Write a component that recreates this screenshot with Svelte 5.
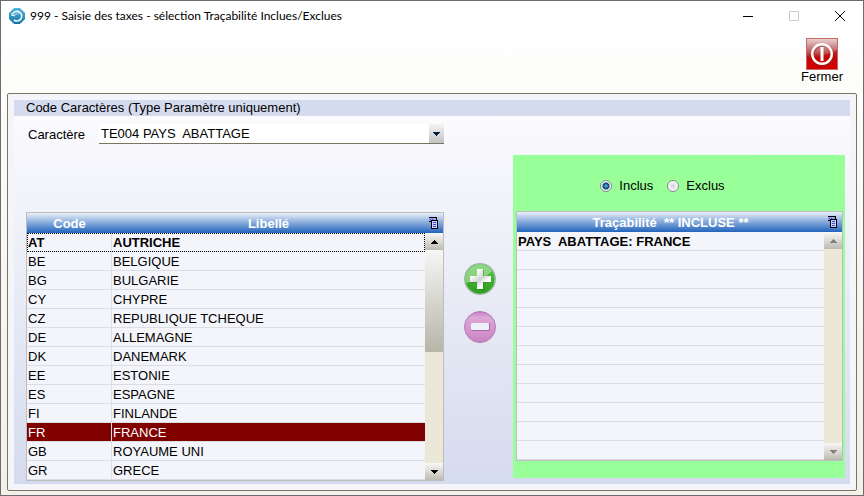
<script lang="ts">
  type Country = { code: string; label: string };

  const countries: Country[] = [
    { code: 'AT', label: 'AUTRICHE' },
    { code: 'BE', label: 'BELGIQUE' },
    { code: 'BG', label: 'BULGARIE' },
    { code: 'CY', label: 'CHYPRE' },
    { code: 'CZ', label: 'REPUBLIQUE TCHEQUE' },
    { code: 'DE', label: 'ALLEMAGNE' },
    { code: 'DK', label: 'DANEMARK' },
    { code: 'EE', label: 'ESTONIE' },
    { code: 'ES', label: 'ESPAGNE' },
    { code: 'FI', label: 'FINLANDE' },
    { code: 'FR', label: 'FRANCE' },
    { code: 'GB', label: 'ROYAUME UNI' },
    { code: 'GR', label: 'GRECE' },
  ];

  const TRACE_ROWS = 12;

  let selected = $state('FR');
  let mode = $state('inclus');
  let traces = $state(['PAYS\u00a0 ABATTAGE: FRANCE']);
  let emptyRows = $derived(Math.max(0, TRACE_ROWS - traces.length));
  let traceTitle = $derived(
    mode === 'inclus' ? 'Traçabilité\u00a0 ** INCLUSE **' : 'Traçabilité\u00a0 ** EXCLUE **'
  );

  function addTrace() {
    const country = countries.find((c) => c.code === selected);
    if (!country) return;
    const line = `PAYS\u00a0 ABATTAGE: ${country.label}`;
    if (!traces.includes(line)) {
      traces.push(line);
    }
  }

  function removeTrace() {
    traces.pop();
  }
</script>

{#snippet copyIcon()}
  <svg width="10" height="12" viewBox="1 0 10 12" shape-rendering="crispEdges" aria-hidden="true">
    <path d="M1 1h7v3H1z" fill="#9a9cf0" />
    <path d="M1 0h8v3H8V1H1zM1 4h2v1H1z" fill="#000" />
    <path d="M2 2h1v1H2zM4 2h1v1H4z" fill="#4a4ad0" />
    <path d="M3 3h7v9H3z" fill="#000" />
    <path d="M4 4h5v7H4z" fill="#c8ccff" />
    <path d="M5 5h3v1H5zM5 7h3v1H5zM5 9h3v1H5z" fill="#4a4ad0" />
  </svg>
{/snippet}

{#snippet arrow(up: boolean, color: string)}
  <svg width="7" height="4" viewBox="0 0 7 4" shape-rendering="crispEdges" aria-hidden="true">
    {#if up}
      <path d="M3 0h1v1h1v1h1v1h1v1H0V3h1V2h1V1h1z" fill={color} />
    {:else}
      <path d="M0 0h7v1H6v1H5v1H4v1H3V3H2V2H1V1H0z" fill={color} />
    {/if}
  </svg>
{/snippet}

<div class="window">
  <header class="titlebar">
    <svg class="logo" width="16" height="16" viewBox="0 0 16 16" aria-hidden="true">
      <defs>
        <linearGradient id="logo-fill" x1="0" y1="0" x2="0" y2="1">
          <stop offset="0" stop-color="#4fb3dc" />
          <stop offset="1" stop-color="#1577a8" />
        </linearGradient>
      </defs>
      <path d="M5 .5h6L15.500 5v6L11 15.500H5L.5 11V5z" fill="url(#logo-fill)" stroke="url(#logo-fill)" />
      <path d="M4 5.500A4.800 4.800 0 1 1 5 12" fill="none" stroke="#f0faff" stroke-width="1.600" />
      <path d="M5.500 8.500a2.500 2.500 0 0 1 4-2.300" fill="none" stroke="#bfe5f4" stroke-width="1" />
      <path d="M2.500 4.500V8H6z" fill="#f0faff" />
    </svg>
    <h1>999 - Saisie des taxes - sélection Traçabilité Inclues/Exclues</h1>
    <div class="controls">
      <button type="button" aria-label="Réduire">
        <svg width="10" height="10" viewBox="0 0 10 10"><path d="M0 5.500h10" stroke="#000" /></svg>
      </button>
      <button type="button" aria-label="Agrandir" disabled>
        <svg width="10" height="10" viewBox="0 0 10 10"><path d="M.5.5h9v9h-9z" fill="none" stroke="#ccc" /></svg>
      </button>
      <button type="button" aria-label="Fermer la fenêtre">
        <svg width="10" height="10" viewBox="0 0 10 10"><path d="M0 0l10 10M10 0L0 10" stroke="#000" /></svg>
      </button>
    </div>
  </header>

  <div class="toolbar">
    <button type="button" class="close">
      <svg width="32" height="32" viewBox="0 0 32 32" aria-hidden="true">
        <defs>
          <linearGradient id="close-fill" x1="0" y1="0" x2="0" y2="1">
            <stop offset="0" stop-color="#e9d4d4" />
            <stop offset="0.45" stop-color="#bd5555" />
            <stop offset="0.6" stop-color="#b41414" />
            <stop offset="1" stop-color="#e60000" />
          </linearGradient>
        </defs>
        <rect x="0.5" y="0.5" width="31" height="31" fill="url(#close-fill)" stroke="#c46a6a" />
        <path d="M1 20q18-1 30-8v19H1z" fill="#c80000" opacity="0.6" />
        <circle cx="16.500" cy="17" r="10" fill="none" stroke="#8c1c1c" stroke-width="3" opacity="0.6" />
        <circle cx="16" cy="16" r="9.800" fill="none" stroke="#fff" stroke-width="2.400" />
        <path d="M16 9v14" stroke="#fff" stroke-width="3" />
      </svg>
      <span>Fermer</span>
    </button>
  </div>

  <main class="frame">
    <div class="panel">
      <h2>Code Caractères (Type Paramètre uniquement)</h2>

      <div class="columns">
        <section class="source">
          <div class="field">
            <label for="caractere">Caractère</label>
            <div class="combo">
              <select id="caractere">
                <option>TE004 PAYS&nbsp; ABATTAGE</option>
              </select>
              <span class="combo-arrow">{@render arrow(false, '#00203c')}</span>
            </div>
          </div>

          <div class="grid">
            <table>
              <thead>
                <tr>
                  <th class="code">Code</th>
                  <th>Libellé</th>
                </tr>
              </thead>
              <tbody>
                {#each countries as country, i (country.code)}
                  <tr
                    class:focused={i === 0}
                    class:selected={country.code === selected}
                    onclick={() => (selected = country.code)}
                  >
                    <td class="code">{country.code}</td>
                    <td>{country.label}</td>
                  </tr>
                {/each}
              </tbody>
            </table>
            <div class="side">
              <button type="button" class="menu" aria-label="Menu de la table">{@render copyIcon()}</button>
              <button type="button" class="step" aria-label="Monter">{@render arrow(true, '#000')}</button>
              <div class="track"><div class="thumb"></div></div>
              <button type="button" class="step" aria-label="Descendre">{@render arrow(false, '#000')}</button>
            </div>
          </div>
        </section>

        <div class="actions">
          <button type="button" aria-label="Ajouter" onclick={addTrace}>
            <svg width="32" height="32" viewBox="0 0 32 32" aria-hidden="true">
              <defs>
                <linearGradient id="add-fill" x1="0" y1="0" x2="0" y2="1">
                  <stop offset="0" stop-color="#5cc850" />
                  <stop offset="1" stop-color="#2c9c1c" />
                </linearGradient>
                <linearGradient id="plus-fill" x1="0" y1="0" x2="1" y2="1">
                  <stop offset="0.2" stop-color="#fff" />
                  <stop offset="0.5" stop-color="#d0d4d0" />
                  <stop offset="0.7" stop-color="#fff" />
                </linearGradient>
              </defs>
              <circle cx="16" cy="16" r="15.200" fill="url(#add-fill)" stroke="#9ab898" stroke-width="1.400" />
              <path d="M2 20A14.500 14.500 0 0 1 28 8Q20 17 2 20z" fill="#b4e6a8" opacity="0.6" />
              <path d="M14 7h6v7h7v6h-7v7h-6v-7H6v-6h8z" fill="#2f7a24" opacity="0.5" />
              <path d="M13 6h6v7h8v6h-8v7h-6v-7H6v-6h7z" fill="url(#plus-fill)" />
            </svg>
          </button>
          <button type="button" aria-label="Retirer" onclick={removeTrace}>
            <svg width="32" height="32" viewBox="0 0 32 32" aria-hidden="true">
              <defs>
                <linearGradient id="remove-fill" x1="0" y1="0" x2="0" y2="1">
                  <stop offset="0" stop-color="#c87cc0" />
                  <stop offset="0.2" stop-color="#dca8d8" />
                  <stop offset="1" stop-color="#c884c4" />
                </linearGradient>
              </defs>
              <circle cx="16" cy="16" r="15.500" fill="url(#remove-fill)" stroke="#b87cb4" />
              <rect x="7" y="12" width="19" height="8" rx="1" fill="#a868a4" />
              <rect x="7" y="12" width="18" height="7" rx="1" fill="#eef0f8" />
            </svg>
          </button>
        </div>

        <section class="target">
          <div class="modes" role="radiogroup" aria-label="Mode">
            <label><input type="radio" name="mode" value="inclus" bind:group={mode} />Inclus</label>
            <label><input type="radio" name="mode" value="exclus" bind:group={mode} />Exclus</label>
          </div>

          <div class="grid">
            <table>
              <thead>
                <tr><th>{traceTitle}</th></tr>
              </thead>
              <tbody>
                {#each traces as trace}
                  <tr class="trace"><td>{trace}</td></tr>
                {/each}
                {#each { length: emptyRows } as _}
                  <tr><td></td></tr>
                {/each}
              </tbody>
            </table>
            <div class="side">
              <button type="button" class="menu" aria-label="Menu de la table">{@render copyIcon()}</button>
              <button type="button" class="step" aria-label="Monter" disabled>{@render arrow(true, '#808080')}</button>
              <div class="track"></div>
              <button type="button" class="step" aria-label="Descendre" disabled>{@render arrow(false, '#808080')}</button>
            </div>
          </div>
        </section>
      </div>
    </div>
  </main>
</div>

<style>
  :global(body) {
    background: #fff;
  }

  .window {
    box-sizing: border-box;
    display: flex;
    flex-direction: column;
    min-height: 100vh;
    border: 1px solid #6c6b6e;
    background: linear-gradient(#fff 30px, #fcfcfa 90px, #f2f0e9);
    font-family: 'Liberation Sans', Arial, sans-serif;
    font-size: 13px;
    color: #000;
  }

  button {
    display: flex;
    align-items: center;
    justify-content: center;
    margin: 0;
    padding: 0;
    border: 0;
    background: none;
    font: inherit;
    color: inherit;
  }

  .titlebar {
    display: flex;
    align-items: center;
    height: 29px;
    padding-left: 8px;
  }

  h1 {
    flex: 1;
    margin: 0 0 0 5px;
    font-family: 'Segoe UI', Lato, 'Open Sans', sans-serif;
    font-size: 12px;
    font-weight: 400;
    white-space: nowrap;
  }

  .controls {
    display: flex;
  }

  .controls button {
    width: 46px;
    height: 29px;
  }

  .toolbar {
    display: flex;
    justify-content: flex-end;
    height: 55px;
    padding: 8px 20px 0 0;
  }

  .close {
    flex-direction: column;
    justify-content: flex-start;
  }

  .close span {
    line-height: 14px;
  }

  .frame {
    flex: 1;
    display: flex;
    margin: 0 6px 4px;
    padding: 6px;
    border: 1px solid #7c7462;
    border-radius: 2px;
    background: #f4f5fb;
  }

  .panel {
    flex: 1;
    min-width: 0;
    background: linear-gradient(#fbfbfe 16px, #d5dbee);
  }

  h2 {
    margin: 0;
    padding: 0 12px;
    background: #d5dbee;
    font-size: 13px;
    font-weight: 400;
    line-height: 16px;
  }

  .columns {
    display: grid;
    grid-template-columns: minmax(0, 418fr) auto minmax(0, 332fr);
    align-items: start;
    padding: 0 5px 3px 12px;
  }

  .field {
    display: flex;
    align-items: center;
    margin: 8px 0 68px 2px;
  }

  .field label {
    width: 71px;
  }

  .combo {
    position: relative;
    flex: 1;
    display: flex;
  }

  select {
    appearance: none;
    width: 100%;
    height: 20px;
    padding: 0 16px 0 2px;
    border: 0;
    border-bottom: 1px solid #7c7462;
    border-radius: 0;
    background: #fff;
    font: inherit;
    color: inherit;
  }

  .combo-arrow {
    position: absolute;
    top: 0;
    right: 0;
    bottom: 1px;
    display: flex;
    align-items: center;
    justify-content: center;
    width: 15px;
    background: linear-gradient(#f4f4f4, #c2c2c2);
    pointer-events: none;
  }

  .grid {
    display: flex;
    border: 1px solid #bdbdc0;
    background: #f4f5fb;
  }

  table {
    flex: 1;
    min-width: 0;
    border-collapse: separate;
    border-spacing: 0;
    table-layout: fixed;
  }

  thead tr,
  .menu {
    background: linear-gradient(#eaf0f9, #8eb0de 45%, #2164bc);
  }

  th {
    box-sizing: border-box;
    height: 20px;
    padding: 2px 0 0;
    color: #fff;
    font-weight: 700;
    line-height: 18px;
    white-space: pre;
  }

  th.code {
    width: 85px;
  }

  td {
    box-sizing: border-box;
    height: 19px;
    padding: 2px 0 0 1px;
    border-bottom: 1px solid #dcdde2;
    line-height: 16px;
    white-space: nowrap;
  }

  td.code {
    border-right: 1px solid #dcdde2;
  }

  tr.focused,
  tr.trace {
    font-weight: 700;
  }

  tr.focused {
    outline: 1px dotted #000;
    outline-offset: -1px;
  }

  tr.selected td {
    background: #800000;
    background-clip: padding-box;
    color: #fff;
  }

  .side {
    display: flex;
    flex-direction: column;
    width: 18px;
  }

  .menu {
    height: 20px;
  }

  .step {
    height: 17px;
    background: linear-gradient(#f8f8f6, #bdbbb0);
  }

  .track {
    flex: 1;
    background: #ebe8d7;
  }

  .thumb {
    height: 48%;
    background: linear-gradient(#f6f6f5, #b7b5a8);
  }

  .actions {
    display: flex;
    flex-direction: column;
    gap: 16px;
    padding: 147px 17px 0 20px;
  }

  .target {
    margin-top: 39px;
    padding: 0 2px 17px 3px;
    background: #99ff99;
  }

  .modes {
    display: flex;
    justify-content: center;
    gap: 14px;
    padding: 22px 34px 16px 0;
    line-height: 18px;
  }

  .modes label {
    display: flex;
    align-items: center;
    gap: 7px;
  }

  input[type='radio'] {
    appearance: none;
    width: 12px;
    height: 12px;
    margin: 0;
    border: 1px solid #85898c;
    border-radius: 50%;
    background: radial-gradient(circle, #d0d4d8, #fff 80%);
  }

  input[type='radio']:checked {
    background: radial-gradient(circle, #5cc4ee 0, #0c3c6c 3px, #e8eef4 4px, #fff);
  }
</style>
